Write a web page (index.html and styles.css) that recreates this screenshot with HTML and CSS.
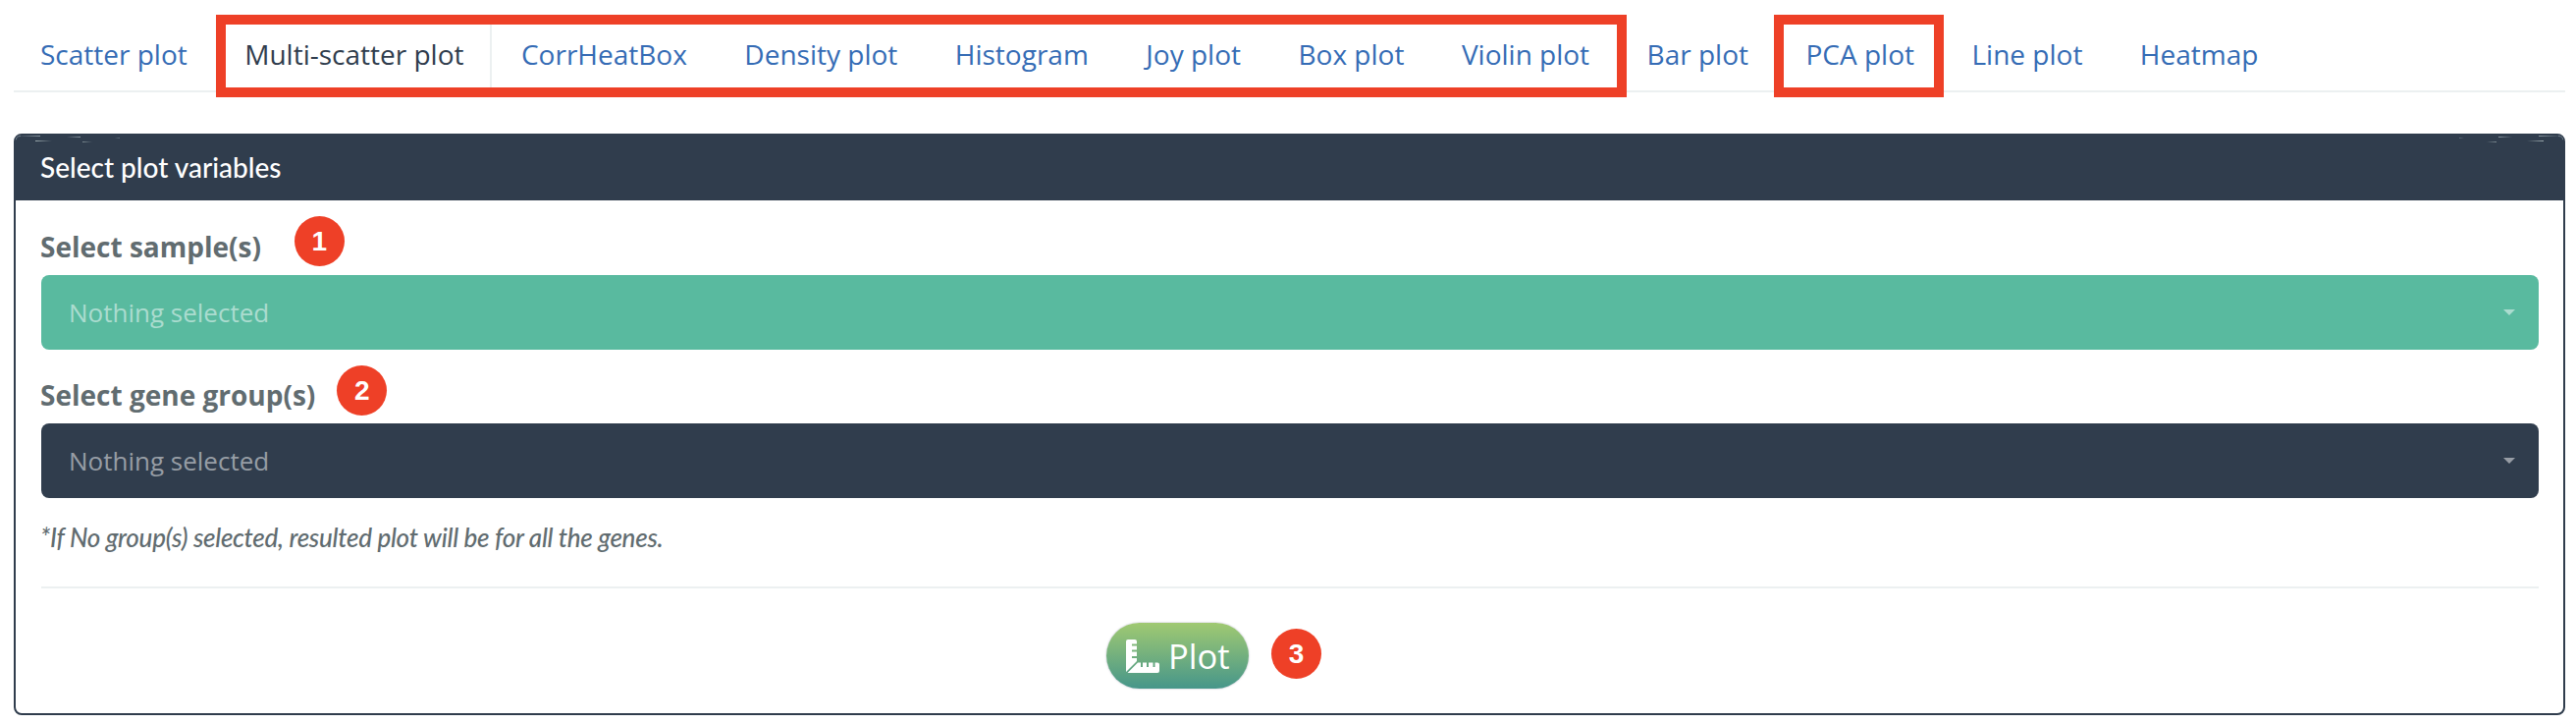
FILE: index.html
```html
<!DOCTYPE html>
<html lang="en">
<head>
<meta charset="utf-8">
<title>Plots</title>
<link rel="stylesheet" href="styles.css">
</head>
<body>
<nav class="tabs">
  <a class="tab">Scatter plot</a>
  <a class="tab active">Multi-scatter plot</a>
  <a class="tab">CorrHeatBox</a>
  <a class="tab">Density plot</a>
  <a class="tab">Histogram</a>
  <a class="tab">Joy plot</a>
  <a class="tab">Box plot</a>
  <a class="tab">Violin plot</a>
  <a class="tab">Bar plot</a>
  <a class="tab">PCA plot</a>
  <a class="tab">Line plot</a>
  <a class="tab">Heatmap</a>
  <span class="frame frame-multi"></span>
  <span class="frame frame-pca"></span>
</nav>
<main class="panel">
  <header class="panel-head">
    <svg class="glint" width="110" height="12" viewBox="0 0 110 12">
      <defs>
        <linearGradient id="out"><stop offset="0" stop-color="#9fadb0"/><stop offset="1" stop-color="#9fadb0" stop-opacity="0"/></linearGradient>
        <linearGradient id="in"><stop offset="0" stop-color="#8896a0" stop-opacity="0"/><stop offset="1" stop-color="#8896a0"/></linearGradient>
      </defs>
      <path d="M2.500 6Q2.500 2.500 7 2.500" fill="none" stroke="#8593a0" stroke-width=".7"/>
      <rect x="4" y="2" width="23" height="1" fill="url(#in)"/>
      <rect x="22" y="7" width="17" height="1" fill="url(#out)"/>
      <rect x="54" y="3" width="14" height="1" fill="url(#in)"/>
      <rect x="70" y="8" width="10" height="1" fill="url(#out)" opacity=".7"/>
      <rect x="103" y="4" width="5" height="1" fill="url(#in)" opacity=".5"/>
    </svg>
    <span class="panel-title">Select plot variables</span>
    <svg class="glint mirrored" width="110" height="12" viewBox="0 0 110 12">
      <path d="M2.500 6Q2.500 2.500 7 2.500" fill="none" stroke="#8593a0" stroke-width=".7"/>
      <rect x="4" y="2" width="23" height="1" fill="url(#in)"/>
      <rect x="22" y="7" width="17" height="1" fill="url(#out)"/>
      <rect x="54" y="3" width="14" height="1" fill="url(#in)"/>
      <rect x="70" y="8" width="10" height="1" fill="url(#out)" opacity=".7"/>
      <rect x="103" y="4" width="5" height="1" fill="url(#in)" opacity=".5"/>
    </svg>
  </header>
  <div class="panel-body">
    <div class="label-row"><label class="label">Select sample(s)</label><span class="badge badge-1">1</span></div>
    <div class="select green"><span class="select-text">Nothing selected</span><span class="caret"></span></div>
    <div class="label-row second"><label class="label">Select gene group(s)</label><span class="badge badge-2">2</span></div>
    <div class="select dark"><span class="select-text">Nothing selected</span><span class="caret"></span></div>
    <p class="note">*If No group(s) selected, resulted plot will be for all the genes.</p>
    <hr class="rule">
    <div class="actions">
      <button class="plot-btn">
        <svg class="ruler" width="34" height="34" viewBox="0 0 34 34" fill="#fff">
          <path d="M2 0H9Q11 0 11 2V4.500H6V6.500H11V10.500H6V12.500H11V17H6V19H11V22L0 33V2Q0 0 2 0Z"/>
          <path d="M12 23.500H15V28H17V23.500H21V28H23V23.500H27.500V28H29.500V23.500H32Q34 23.500 34 25.500V32Q34 34 32 34H1.500Z"/>
        </svg>
        <span class="plot-text">Plot</span>
      </button>
      <span class="badge badge-3">3</span>
    </div>
  </div>
</main>
</body>
</html>
```
FILE: styles.css
```css
* { box-sizing: border-box; }
body { margin: 0; padding: 0 11px 0 14px; background: #fff; font-family: "Open Sans", sans-serif; font-size: 28px; color: #616c70; }
.tabs { position: relative; display: flex; height: 94px; padding-top: 15px; border-bottom: 2px solid #ecf0f1; }
.tab { height: 77px; padding: 0 29.5px 0 27px; border: 1px solid transparent; line-height: 78px; color: #356cb5; white-space: nowrap; }
.tab:first-child { padding-left: 26px; }
.tab.active { padding-right: 26.5px; margin-right: 2px; color: #303d4d; border-right: 2px solid #ecf0f1; background: #fff; }
.frame { position: absolute; top: 15px; height: 84px; border: 10px solid #ee4027; }
.frame-multi { left: 206px; width: 1437px; }
.frame-pca { left: 1793px; width: 173px; }
.panel { margin-top: 42px; height: 592px; border: 2px solid #303d4d; border-radius: 8px; }
.panel-head { position: relative; height: 66px; padding-left: 25px; background: #303d4d; border-radius: 5px 5px 0 0; }
.panel-title { display: block; line-height: 65px; color: #fff; font-family: Lato, sans-serif; font-weight: 500; }
.glint { position: absolute; top: -2px; left: -2px; }
.glint.mirrored { left: auto; right: -2px; transform: scaleX(-1); }
.panel-body { padding: 0 25px 0 26px; }
.label-row { display: flex; align-items: flex-start; height: 76px; margin-left: -1px; }
.label-row.second { height: 75px; }
.label { padding-top: 28px; line-height: 38px; font-weight: 700; }
.second .label { padding-top: 27px; }
.badge { display: flex; align-items: center; justify-content: center; width: 51px; height: 51px; border-radius: 50%; background: #ee4027; color: #fff; font: 700 28px "Liberation Sans", sans-serif; flex: none; }
.badge-1 { margin: 16px 0 0 34px; }
.badge-2 { margin: 16px 0 0 22px; }
.badge-3 { margin: 6px 0 0 23px; }
.select { display: flex; align-items: center; justify-content: space-between; height: 76px; padding: 0 24px 0 28px; border-radius: 8px; font-size: 26px; }
.green { background: #59ba9f; color: #abdccf; }
.dark { background: #303d4d; color: #979da5; }
.caret { border: 6px solid transparent; border-top-color: currentColor; border-bottom: 0; }
.note { margin: 23px 0 0 -1px; font: italic 500 26px/34px Lato, sans-serif; letter-spacing: -.28px; }
.rule { margin: 33px 0 0; border: 0; height: 2px; background: #ecf0f1; }
.actions { display: flex; align-items: flex-start; padding: 35px 0 0 1085px; }
.plot-btn { display: flex; align-items: center; width: 145px; height: 67px; padding: 0 0 0 20px; gap: 9px; border: 0; border-radius: 34px; background: linear-gradient(#a0c972, #46968a); box-shadow: 0 0 2px #aab; color: #fff; font: 34.5px "Open Sans", sans-serif; }
```
